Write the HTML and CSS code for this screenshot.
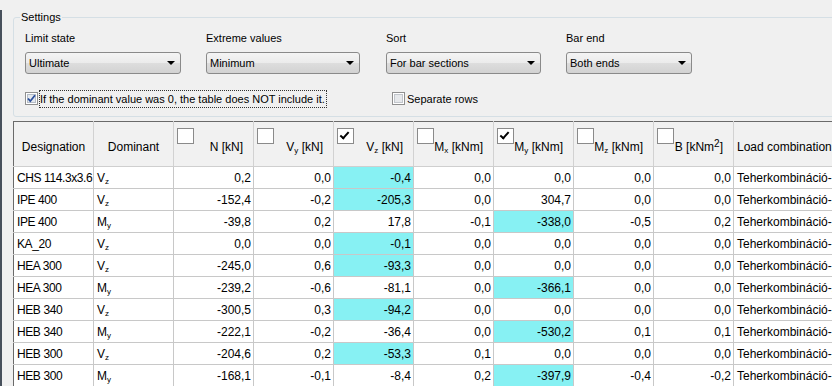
FILE: index.html
```html
<!DOCTYPE html>
<html lang="en">
<head>
    <meta charset="UTF-8">
    <title>Extreme values</title>
    <link rel="stylesheet" href="styles.css">
</head>
<body>
    <div class="window">
        <fieldset class="settings">
            <legend>Settings</legend>
            <div class="field">
                <div class="label">Limit state</div>
                <div class="combo w1"><span>Ultimate</span><i class="arrow"></i></div>
            </div>
            <div class="field">
                <div class="label">Extreme values</div>
                <div class="combo w2"><span>Minimum</span><i class="arrow"></i></div>
            </div>
            <div class="field">
                <div class="label">Sort</div>
                <div class="combo w3"><span>For bar sections</span><i class="arrow"></i></div>
            </div>
            <div class="field">
                <div class="label">Bar end</div>
                <div class="combo w4"><span>Both ends</span><i class="arrow"></i></div>
            </div>
            <div class="option wide">
                <svg class="check" width="13" height="13" viewBox="0 0 13 13">
                    <rect x="0.5" y="0.5" width="12" height="12" fill="#fff" stroke="#8f8f8f"/>
                    <rect x="2.5" y="2.5" width="8" height="8" fill="#e4e8ee" stroke="#b4bcc6"/>
                    <path d="M3 6.5 L5.3 9.2 L10 3.2" fill="none" stroke="#2a4f9c" stroke-width="1.8"/>
                </svg>
                <span class="focus">If the dominant value was 0, the table does NOT include it.</span>
            </div>
            <div class="option second">
                <svg class="check" width="13" height="13" viewBox="0 0 13 13">
                    <rect x="0.5" y="0.5" width="12" height="12" fill="#fff" stroke="#8f8f8f"/>
                    <rect x="2.5" y="2.5" width="8" height="8" fill="#e6e8eb" stroke="#c2c6cc"/>
                </svg>
                <span>Separate rows</span>
            </div>
        </fieldset>

        <table class="grid">
            <colgroup>
                <col class="c"><col class="c"><col class="c"><col class="c"><col class="c">
                <col class="c"><col class="c"><col class="c"><col class="c"><col class="last">
            </colgroup>
            <thead>
                <tr>
                    <th class="center">Designation</th>
                    <th class="center">Dominant</th>
                    <th><div class="hcell"><i class="box"></i><span>N [kN]</span></div></th>
                    <th><div class="hcell"><i class="box"></i><span>V<sub>y</sub> [kN]</span></div></th>
                    <th><div class="hcell"><i class="box on"></i><span>V<sub>z</sub> [kN]</span></div></th>
                    <th><div class="hcell"><i class="box"></i><span>M<sub>x</sub> [kNm]</span></div></th>
                    <th><div class="hcell"><i class="box on"></i><span>M<sub>y</sub> [kNm]</span></div></th>
                    <th><div class="hcell"><i class="box"></i><span>M<sub>z</sub> [kNm]</span></div></th>
                    <th><div class="hcell"><i class="box"></i><span>B [kNm<sup>2</sup>]</span></div></th>
                    <th class="left">Load combination</th>
                </tr>
            </thead>
            <tbody>
                <tr><td class="name">CHS 114.3x3.6</td><td>V<sub>z</sub></td><td class="n">0,2</td><td class="n">0,0</td><td class="n hi">-0,4</td><td class="n">0,0</td><td class="n">0,0</td><td class="n">0,0</td><td class="n">0,0</td><td>Teherkombináció-1</td></tr>
                <tr><td class="name">IPE 400</td><td>V<sub>z</sub></td><td class="n">-152,4</td><td class="n">-0,2</td><td class="n hi">-205,3</td><td class="n">0,0</td><td class="n">304,7</td><td class="n">0,0</td><td class="n">0,0</td><td>Teherkombináció-2</td></tr>
                <tr><td class="name">IPE 400</td><td>M<sub>y</sub></td><td class="n">-39,8</td><td class="n">0,2</td><td class="n">17,8</td><td class="n">-0,1</td><td class="n hi">-338,0</td><td class="n">-0,5</td><td class="n">0,2</td><td>Teherkombináció-2</td></tr>
                <tr><td class="name">KA_20</td><td>V<sub>z</sub></td><td class="n">0,0</td><td class="n">0,0</td><td class="n hi">-0,1</td><td class="n">0,0</td><td class="n">0,0</td><td class="n">0,0</td><td class="n">0,0</td><td>Teherkombináció-1</td></tr>
                <tr><td class="name">HEA 300</td><td>V<sub>z</sub></td><td class="n">-245,0</td><td class="n">0,6</td><td class="n hi">-93,3</td><td class="n">0,0</td><td class="n">0,0</td><td class="n">0,0</td><td class="n">0,0</td><td>Teherkombináció-2</td></tr>
                <tr><td class="name">HEA 300</td><td>M<sub>y</sub></td><td class="n">-239,2</td><td class="n">-0,6</td><td class="n">-81,1</td><td class="n">0,0</td><td class="n hi">-366,1</td><td class="n">0,0</td><td class="n">0,0</td><td>Teherkombináció-2</td></tr>
                <tr><td class="name">HEB 340</td><td>V<sub>z</sub></td><td class="n">-300,5</td><td class="n">0,3</td><td class="n hi">-94,2</td><td class="n">0,0</td><td class="n">0,0</td><td class="n">0,0</td><td class="n">0,0</td><td>Teherkombináció-2</td></tr>
                <tr><td class="name">HEB 340</td><td>M<sub>y</sub></td><td class="n">-222,1</td><td class="n">-0,2</td><td class="n">-36,4</td><td class="n">0,0</td><td class="n hi">-530,2</td><td class="n">0,1</td><td class="n">0,1</td><td>Teherkombináció-2</td></tr>
                <tr><td class="name">HEB 300</td><td>V<sub>z</sub></td><td class="n">-204,6</td><td class="n">0,2</td><td class="n hi">-53,3</td><td class="n">0,1</td><td class="n">0,0</td><td class="n">0,0</td><td class="n">0,0</td><td>Teherkombináció-2</td></tr>
                <tr><td class="name">HEB 300</td><td>M<sub>y</sub></td><td class="n">-168,1</td><td class="n">-0,1</td><td class="n">-8,4</td><td class="n">0,2</td><td class="n hi">-397,9</td><td class="n">-0,4</td><td class="n">-0,2</td><td>Teherkombináció-2</td></tr>
            </tbody>
        </table>
    </div>
</body>
</html>
```

FILE: styles.css
```css
html, body {
    margin: 0;
    padding: 0;
    width: 832px;
    height: 386px;
    overflow: hidden;
    background-color: #f0f0f0;
}
body {
    font-family: 'Liberation Sans', Arial, sans-serif;
    font-size: 12px;
    color: #000;
}
.window {
    border-left: 2px solid #47505b;
    height: 386px;
    width: 1000px;
}

/* settings group */
.settings {
    margin: 10px 0 0 11px;
    padding: 0 0 9px 11px;
    width: 900px;
    border: 1px solid #d5dfe5;
    border-radius: 3px;
    display: grid;
    grid-template-columns: 181px 180px 180px 180px;
    row-gap: 16px;
    font-size: 11px;
}
.settings legend {
    margin-left: -5px;
    padding: 0 1px;
    line-height: 15px;
}
.field {
    padding-top: 6px;
}
.label {
    line-height: 15px;
    margin-bottom: 6px;
}
.combo {
    height: 20px;
    border: 1px solid #8a8a8a;
    border-radius: 3px;
    background: linear-gradient(#f4f4f4, #ebebeb 50%, #dddddd 51%, #d2d2d2);
    display: flex;
    align-items: center;
    justify-content: space-between;
    padding: 0 5px 0 3px;
    box-sizing: content-box;
}
.combo.w1 { width: 146px; }
.combo.w2 { width: 144px; }
.combo.w3 { width: 145px; }
.combo.w4 { width: 116px; }
.arrow {
    width: 0;
    height: 0;
    border-left: 4px solid transparent;
    border-right: 4px solid transparent;
    border-top: 4px solid #000;
}
.option {
    display: flex;
    align-items: center;
    height: 17px;
}
.option.wide {
    grid-column: 1 / 3;
}
.option.second {
    grid-column: 3 / 5;
    padding-left: 6px;
}
.check {
    flex: none;
    margin-right: 2px;
}
.focus {
    outline: 1px dotted #333;
    padding: 1px 1px 1px 0;
    line-height: 14px;
}

/* result grid */
.grid {
    margin: 4px 0 0 11px;
    border-collapse: collapse;
    table-layout: fixed;
    width: 870px;
    background-color: #fff;
    border-top: 1px solid #6a6a6a;
    border-left: 1px solid #6a6a6a;
}
.grid col.c { width: 80px; }
.grid col.last { width: 150px; }
.grid th {
    height: 44px;
    padding: 0;
    font-weight: normal;
    background-color: #f1f1f1;
    border-right: 1px solid #d2d2d2;
    border-bottom: 1px solid #cfcfcf;
    text-align: right;
    vertical-align: top;
    white-space: nowrap;
}
.grid th.center {
    height: 39px;
    text-align: center;
    vertical-align: middle;
    padding-top: 5px;
}
.grid th.left {
    height: 39px;
    text-align: left;
    vertical-align: middle;
    padding: 5px 0 0 3px;
}
.hcell {
    display: flex;
    justify-content: space-between;
    height: 44px;
    padding: 0 10px 0 3px;
}
.hcell span {
    align-self: center;
    padding-top: 6px;
}
.box {
    width: 15px;
    height: 14px;
    margin-top: 6px;
    border: 1px solid #8a8a8a;
    background-color: #fff;
    display: flex;
    align-items: center;
    justify-content: center;
}
.box.on::after {
    content: '';
    width: 7px;
    height: 3px;
    border-left: 2px solid #000;
    border-bottom: 2px solid #000;
    transform: rotate(-48deg);
    margin: -3px 0 0 -2px;
}
.grid td {
    height: 21px;
    padding: 0 3px;
    border-right: 1px solid #c8c8c8;
    border-bottom: 1px solid #c8c8c8;
    white-space: nowrap;
    overflow: hidden;
}
.grid td.name {
    letter-spacing: -0.4px;
}
.grid td.n {
    text-align: right;
    padding-right: 2px;
}
.grid td.hi {
    background-color: #87f1f3;
}
sub {
    font-size: 8px;
    vertical-align: -2px;
    line-height: 0;
}
sup {
    font-size: 10px;
    vertical-align: 4px;
    line-height: 0;
}
```
